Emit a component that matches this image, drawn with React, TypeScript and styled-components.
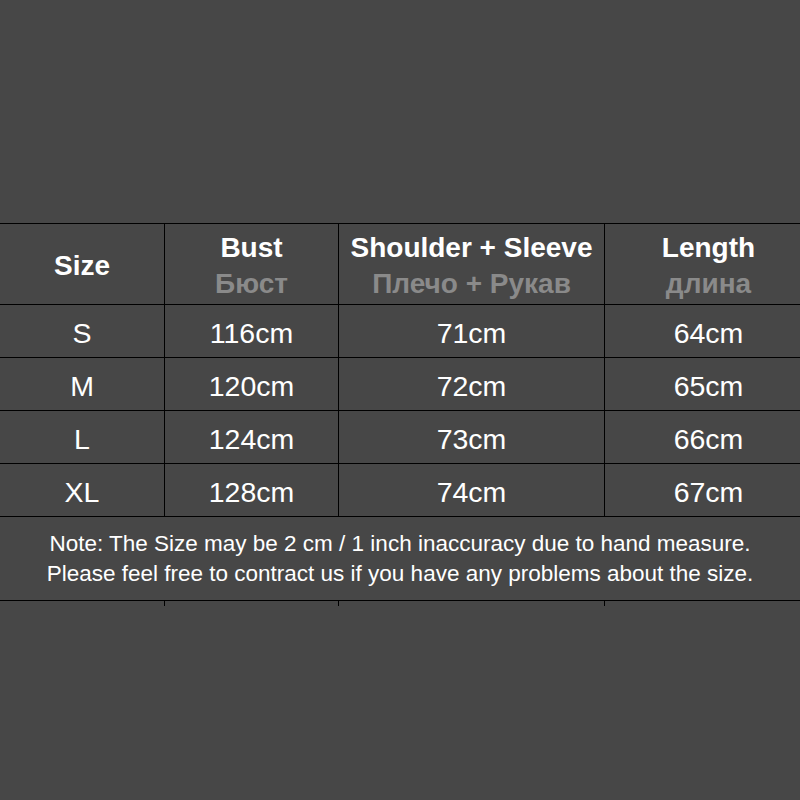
import styled, { createGlobalStyle } from "styled-components";

const GlobalStyle = createGlobalStyle`
  html, body {
    margin: 0;
    padding: 0;
    background: #474747;
  }
`;

// last column runs a little past the right edge of the picture
const COLUMNS = "164px 174px 266px 208px";

const rows = [
  { size: "S", bust: "116cm", shoulder: "71cm", length: "64cm" },
  { size: "M", bust: "120cm", shoulder: "72cm", length: "65cm" },
  { size: "L", bust: "124cm", shoulder: "73cm", length: "66cm" },
  { size: "XL", bust: "128cm", shoulder: "74cm", length: "67cm" },
];

const headers = [
  { en: "Bust", ru: "Бюст" },
  { en: "Shoulder + Sleeve", ru: "Плечо + Рукав" },
  { en: "Length", ru: "длина" },
];

const App = () => {
  return (
    <Page>
      <GlobalStyle />
      <Table>
        <Row $height={81}>
          <Cell>
            <HeadTitle>Size</HeadTitle>
          </Cell>
          {headers.map((h) => (
            <Cell key={h.en}>
              <HeadTitle>{h.en}</HeadTitle>
              <HeadSub>{h.ru}</HeadSub>
            </Cell>
          ))}
        </Row>
        {rows.map((r) => (
          <Row key={r.size} $height={53}>
            <Cell>{r.size}</Cell>
            <Cell>{r.bust}</Cell>
            <Cell>{r.shoulder}</Cell>
            <Cell>{r.length}</Cell>
          </Row>
        ))}
        <NoteRow>
          <NoteText>
            Note: The Size may be 2 cm / 1 inch inaccuracy due to hand measure.
            <br />
            Please feel free to contract us if you have any problems about the size.
          </NoteText>
        </NoteRow>
        <TickRow>
          <Tick />
          <Tick />
          <Tick />
          <Tick />
        </TickRow>
      </Table>
    </Page>
  );
};

const Page = styled.div`
  width: 800px;
  height: 800px;
  overflow: hidden;
  background: #474747;
  padding-top: 223px;
  box-sizing: border-box;
  font-family: "Liberation Sans", Arial, sans-serif;
  color: #ffffff;
`;

const Table = styled.div`
  display: flex;
  flex-direction: column;
  width: 812px;
`;

const Row = styled.div<{ $height: number }>`
  display: grid;
  grid-template-columns: ${COLUMNS};
  height: ${({ $height }) => $height}px;
  border-top: 1px solid #000;
  box-sizing: border-box;
`;

const Cell = styled.div`
  display: flex;
  flex-direction: column;
  align-items: center;
  justify-content: center;
  padding-top: 3px;
  font-size: 28.5px;
  line-height: 36px;
  & + & {
    border-left: 1px solid #000;
  }
`;

const HeadTitle = styled.div`
  font-weight: 700;
  font-size: 28px;
  color: #ffffff;
`;

const HeadSub = styled.div`
  font-weight: 700;
  font-size: 28px;
  color: #8a8a8a;
`;

const NoteRow = styled.div`
  width: 800px;
  height: 85px;
  border-top: 1px solid #000;
  border-bottom: 1px solid #000;
  box-sizing: border-box;
  display: flex;
  align-items: center;
  justify-content: center;
`;

const NoteText = styled.p`
  margin: 0;
  text-align: center;
  font-size: 22.5px;
  line-height: 30px;
`;

const TickRow = styled.div`
  display: grid;
  grid-template-columns: ${COLUMNS};
  height: 5px;
`;

const Tick = styled.div`
  & + & {
    border-left: 1px solid #000;
  }
`;

export default App;
